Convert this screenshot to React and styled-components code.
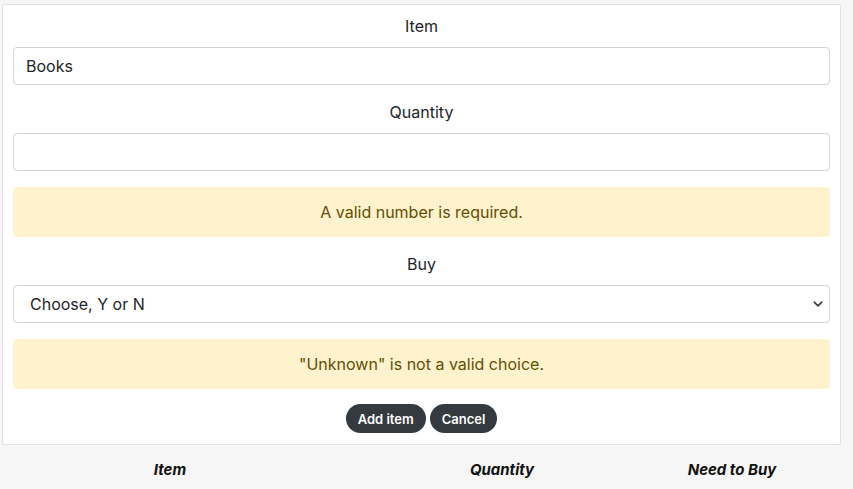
import React from 'react';
import styled, { createGlobalStyle } from 'styled-components';

const GlobalStyle = createGlobalStyle`
  html, body {
    margin: 0;
    padding: 0;
    background-color: #f6f6f6;
    font-family: 'Inter', 'Open Sans', sans-serif;
    color: #212529;
  }
  * {
    box-sizing: border-box;
  }
`;

const Page = styled.div`
  padding: 4px 0 0 2px;
  width: 853px;
`;

const Card = styled.form`
  display: flex;
  flex-direction: column;
  width: 839px;
  padding: 9px 10px 11px;
  background-color: #fff;
  border: 1px solid #dfe1e5;
  border-radius: 2px;
  position: relative;
  z-index: 1;
`;

const Field = styled.div`
  display: flex;
  flex-direction: column;
  gap: 9px;
  margin-bottom: ${(p) => p.$space || 15}px;
`;

const Label = styled.label`
  display: block;
  text-align: center;
  font-size: 16px;
  line-height: 24px;
  color: #212529;
`;

const Input = styled.input`
  width: 100%;
  height: 38px;
  padding: 0 12px;
  font-family: inherit;
  font-size: 16px;
  color: #212529;
  background: #fff;
  border: 1px solid #ced4da;
  border-radius: 4px;
  outline: none;
`;

const SelectWrap = styled.div`
  position: relative;
  svg {
    position: absolute;
    right: 6px;
    top: 50%;
    transform: translateY(-50%);
    pointer-events: none;
  }
`;

const Select = styled.select`
  width: 100%;
  height: 38px;
  padding: 0 36px 0 16px;
  font-family: inherit;
  font-size: 16px;
  color: #212529;
  background: #fff;
  border: 1px solid #ced4da;
  border-radius: 4px;
  appearance: none;
  outline: none;
`;

const Alert = styled.div`
  padding: 13px 16px;
  margin-bottom: 15px;
  background-color: #fff3cd;
  color: #664d03;
  border-radius: 4px;
  text-align: center;
  font-size: 16px;
  line-height: 24px;
`;

const Actions = styled.div`
  display: flex;
  justify-content: center;
  gap: 4px;
`;

const Button = styled.button`
  height: 29px;
  padding: 0 12px;
  border: none;
  border-radius: 15px;
  background-color: #343a40;
  color: #fff;
  font-family: inherit;
  font-size: 13px;
  font-weight: 600;
  cursor: pointer;
`;

const TableHead = styled.div`
  display: grid;
  grid-template-columns: 336px 328px 132px;
  width: 795px;
  height: 50px;
  align-items: center;
  border-top: 1px solid #dcdce0;
  margin-top: -1px;
`;

const HeadCell = styled.div`
  text-align: center;
  font-size: 15px;
  font-weight: 700;
  font-style: italic;
  color: #111;
`;

const Chevron = () => (
  <svg width="12" height="10" viewBox="0 0 16 16" fill="none">
    <path d="m2 5 6 6 6-6" stroke="#343a40" strokeWidth="2.5" strokeLinecap="round" strokeLinejoin="round" />
  </svg>
);

export default function App() {
  return (
    <>
      <GlobalStyle />
      <Page>
        <Card onSubmit={(e) => e.preventDefault()}>
          <Field>
            <Label>Item</Label>
            <Input type="text" defaultValue="Books" />
          </Field>
          <Field $space={16}>
            <Label>Quantity</Label>
            <Input type="text" />
          </Field>
          <Alert>A valid number is required.</Alert>
          <Field $space={16}>
            <Label>Buy</Label>
            <SelectWrap>
              <Select defaultValue="">
                <option value="">Choose, Y or N</option>
                <option value="Y">Y</option>
                <option value="N">N</option>
              </Select>
              <Chevron />
            </SelectWrap>
          </Field>
          <Alert>"Unknown" is not a valid choice.</Alert>
          <Actions>
            <Button type="submit">Add item</Button>
            <Button type="button">Cancel</Button>
          </Actions>
        </Card>
        <TableHead>
          <HeadCell>Item</HeadCell>
          <HeadCell>Quantity</HeadCell>
          <HeadCell>Need to Buy</HeadCell>
        </TableHead>
      </Page>
    </>
  );
}
